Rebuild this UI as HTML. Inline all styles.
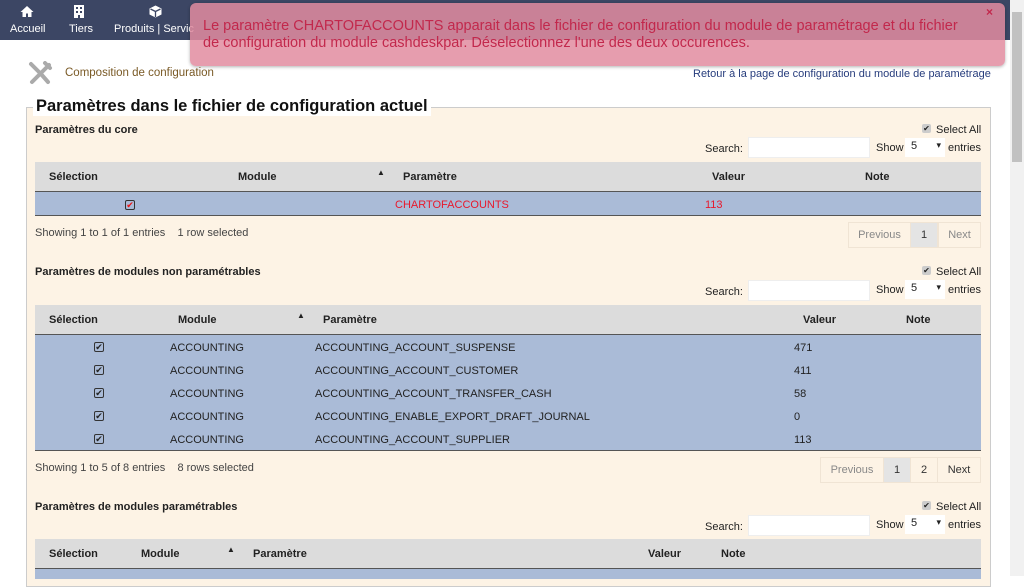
<!DOCTYPE html>
<html><head><meta charset="utf-8"><style>
*{margin:0;padding:0;box-sizing:border-box}
body{width:1024px;height:576px;overflow:hidden;background:#fff;font-family:"Liberation Sans",sans-serif;font-size:11px;color:#222;position:relative}
.a{position:absolute;white-space:nowrap}
.nav{position:absolute;left:0;top:0;width:1010px;height:40px;background:#3c4664}
.nav .a{color:#fff;font-size:11px}
.sb{position:absolute;left:1010px;top:0;width:14px;height:576px;background:#f1f1f1}
.sb div{position:absolute;left:2px;top:12px;width:10px;height:150px;background:#c1c1c1}
.fs{position:absolute;left:26px;top:107px;width:965px;height:480px;background:#fdf3e5;border:1px solid #ccc}
.hd{position:absolute;left:35px;width:946px;height:30px;background:#dcdcdc;border-bottom:1px solid #555}
.rw{position:absolute;left:35px;width:946px;background:#aabbd7;border-bottom:1px solid #555}
b{font-weight:bold}
.inp{position:absolute;width:122px;height:21px;background:#fff;border:1px solid #eee}
.sel{position:absolute;width:40px;height:19px;background:#fff;padding:2px 0 0 6px;font-size:11px}
.sel:after{content:"▾";position:absolute;right:4px;top:2px;font-size:9px}
.pg{position:absolute;height:26px;border:1px solid #f0e4d4;text-align:center;line-height:24px;color:#333}
.cb{position:absolute;width:10px;height:10px;border:1.5px solid #333;border-radius:2px;font-size:9px;line-height:8px;text-align:center}
.sa{position:absolute;width:9px;height:9px;background:#ccc;border-radius:2px;font-size:8px;line-height:9px;text-align:center}
</style></head><body>
<div class="nav">
<svg class="a" style="left:20px;top:5px" width="14" height="13" viewBox="0 0 14 13"><path d="M7 1L0.5 7h2v5h3.5V8.5h2V12H11.5V7h2z" fill="#fff"/></svg>
<div class="a" style="left:10px;top:23px">Accueil</div>
<svg class="a" style="left:74px;top:5px" width="10" height="13" viewBox="0 0 10 13"><rect x="0" y="0" width="10" height="13" fill="#fff"/><g fill="#3c4664"><rect x="2" y="2" width="2" height="2"/><rect x="6" y="2" width="2" height="2"/><rect x="2" y="6" width="2" height="2"/><rect x="6" y="6" width="2" height="2"/><rect x="4" y="10" width="2" height="3"/></g></svg>
<div class="a" style="left:69px;top:23px">Tiers</div>
<svg class="a" style="left:149px;top:5px" width="13" height="13" viewBox="0 0 13 13"><path d="M6.5 0.5L12.5 3.5V9.5L6.5 12.5L0.5 9.5V3.5z" fill="#fff"/><path d="M1.5 4L6.5 6.5L11.5 4M6.5 6.5V12" stroke="#3c4664" stroke-width="1.3" fill="none"/></svg>
<div class="a" style="left:114px;top:23px">Produits | Servic</div>
</div>
<div class="sb"><div></div></div>
<div class="a" style="left:190px;top:3px;width:815px;height:63px;background:rgba(226,140,160,0.85);border-radius:6px;box-shadow:0 1px 3px rgba(0,0,0,.3)"></div>
<div class="a" style="left:203px;top:18px;color:#c2284c;font-size:14.5px;line-height:17px;white-space:normal;width:772px">Le paramètre CHARTOFACCOUNTS apparait dans le fichier de configuration du module de paramétrage et du fichier de configuration du module cashdeskpar. Déselectionnez l'une des deux occurences.</div>
<div class="a" style="left:986px;top:5px;color:#c2284c;font-weight:bold;font-size:12px">×</div>

<svg class="a" style="left:28px;top:61px" width="26" height="24" viewBox="0 0 26 24"><path d="M3 3l10 10M13 13l7 8M4 21L21 4M17 2l5 5" stroke="#aaa" stroke-width="4" stroke-linecap="round" fill="none"/></svg>
<div class="a" style="left:65px;top:67px;color:#7a5a26;font-size:11.5px">Composition de configuration</div>
<div class="a" style="left:693px;top:68px;color:#263c7c;font-size:11px">Retour à la page de configuration du module de paramétrage</div>

<div class="fs"></div>
<div class="a" style="left:33px;top:97px;background:#fff;padding:0 3px;font-size:16.5px;font-weight:bold;color:#111">Paramètres dans le fichier de configuration actuel</div>

<!-- section 1 -->
<div class="a" style="left:35px;top:124px"><b>Paramètres du core</b></div>
<div class="sa" style="left:922px;top:124px">✔</div><div class="a" style="left:936px;top:124px">Select All</div>
<div class="a" style="left:705px;top:143px">Search:</div><div class="inp" style="left:748px;top:137px"></div>
<div class="a" style="left:876px;top:142px">Show</div><div class="sel" style="left:905px;top:138px">5</div><div class="a" style="left:948px;top:142px">entries</div>
<div class="hd" style="top:162px"></div>
<div class="a" style="left:49px;top:171px"><b>Sélection</b></div><div class="a" style="left:238px;top:171px"><b>Module</b></div><div class="a" style="left:377px;top:168px;font-size:8px">▲</div><div class="a" style="left:403px;top:171px"><b>Paramètre</b></div><div class="a" style="left:712px;top:171px"><b>Valeur</b></div><div class="a" style="left:865px;top:171px"><b>Note</b></div>
<div class="rw" style="top:192px;height:24px"></div>
<div class="cb" style="left:125px;top:200px;color:#e11">✔</div>
<div class="a" style="left:395px;top:199px;color:#e8192c">CHARTOFACCOUNTS</div><div class="a" style="left:705px;top:199px;color:#e8192c">113</div>
<div class="a" style="left:35px;top:227px;color:#444">Showing 1 to 1 of 1 entries &nbsp;&nbsp; 1 row selected</div>
<div class="pg" style="left:848px;top:222px;width:63px;color:#888">Previous</div><div class="pg" style="left:910px;top:222px;width:28px;background:#e4e4e4">1</div><div class="pg" style="left:938px;top:222px;width:43px;color:#888">Next</div>

<!-- section 2 -->
<div class="a" style="left:35px;top:266px"><b>Paramètres de modules non paramétrables</b></div>
<div class="sa" style="left:922px;top:266px">✔</div><div class="a" style="left:936px;top:266px">Select All</div>
<div class="a" style="left:705px;top:286px">Search:</div><div class="inp" style="left:748px;top:280px"></div>
<div class="a" style="left:876px;top:284px">Show</div><div class="sel" style="left:905px;top:280px">5</div><div class="a" style="left:948px;top:284px">entries</div>
<div class="hd" style="top:305px"></div>
<div class="a" style="left:49px;top:314px"><b>Sélection</b></div><div class="a" style="left:178px;top:314px"><b>Module</b></div><div class="a" style="left:297px;top:311px;font-size:8px">▲</div><div class="a" style="left:323px;top:314px"><b>Paramètre</b></div><div class="a" style="left:803px;top:314px"><b>Valeur</b></div><div class="a" style="left:906px;top:314px"><b>Note</b></div>
<div class="rw" style="top:335px;height:116px"></div>
<div class="cb" style="left:94px;top:342px">✔</div><div class="a" style="left:170px;top:342px">ACCOUNTING</div><div class="a" style="left:315px;top:342px">ACCOUNTING_ACCOUNT_SUSPENSE</div><div class="a" style="left:794px;top:342px">471</div>
<div class="cb" style="left:94px;top:365px">✔</div><div class="a" style="left:170px;top:365px">ACCOUNTING</div><div class="a" style="left:315px;top:365px">ACCOUNTING_ACCOUNT_CUSTOMER</div><div class="a" style="left:794px;top:365px">411</div>
<div class="cb" style="left:94px;top:388px">✔</div><div class="a" style="left:170px;top:388px">ACCOUNTING</div><div class="a" style="left:315px;top:388px">ACCOUNTING_ACCOUNT_TRANSFER_CASH</div><div class="a" style="left:794px;top:388px">58</div>
<div class="cb" style="left:94px;top:411px">✔</div><div class="a" style="left:170px;top:411px">ACCOUNTING</div><div class="a" style="left:315px;top:411px">ACCOUNTING_ENABLE_EXPORT_DRAFT_JOURNAL</div><div class="a" style="left:794px;top:411px">0</div>
<div class="cb" style="left:94px;top:434px">✔</div><div class="a" style="left:170px;top:434px">ACCOUNTING</div><div class="a" style="left:315px;top:434px">ACCOUNTING_ACCOUNT_SUPPLIER</div><div class="a" style="left:794px;top:434px">113</div>
<div class="a" style="left:35px;top:462px;color:#444">Showing 1 to 5 of 8 entries &nbsp;&nbsp; 8 rows selected</div>
<div class="pg" style="left:820px;top:457px;width:64px;color:#888">Previous</div><div class="pg" style="left:883px;top:457px;width:28px;background:#e4e4e4">1</div><div class="pg" style="left:910px;top:457px;width:28px">2</div><div class="pg" style="left:937px;top:457px;width:44px">Next</div>

<!-- section 3 -->
<div class="a" style="left:35px;top:501px"><b>Paramètres de modules paramétrables</b></div>
<div class="sa" style="left:922px;top:501px">✔</div><div class="a" style="left:936px;top:501px">Select All</div>
<div class="a" style="left:705px;top:521px">Search:</div><div class="inp" style="left:748px;top:515px"></div>
<div class="a" style="left:876px;top:519px">Show</div><div class="sel" style="left:905px;top:515px">5</div><div class="a" style="left:948px;top:519px">entries</div>
<div class="hd" style="top:539px"></div>
<div class="a" style="left:49px;top:548px"><b>Sélection</b></div><div class="a" style="left:141px;top:548px"><b>Module</b></div><div class="a" style="left:227px;top:545px;font-size:8px">▲</div><div class="a" style="left:253px;top:548px"><b>Paramètre</b></div><div class="a" style="left:648px;top:548px"><b>Valeur</b></div><div class="a" style="left:721px;top:548px"><b>Note</b></div>
<div class="rw" style="top:569px;height:10px;border:none"></div>
</body></html>
